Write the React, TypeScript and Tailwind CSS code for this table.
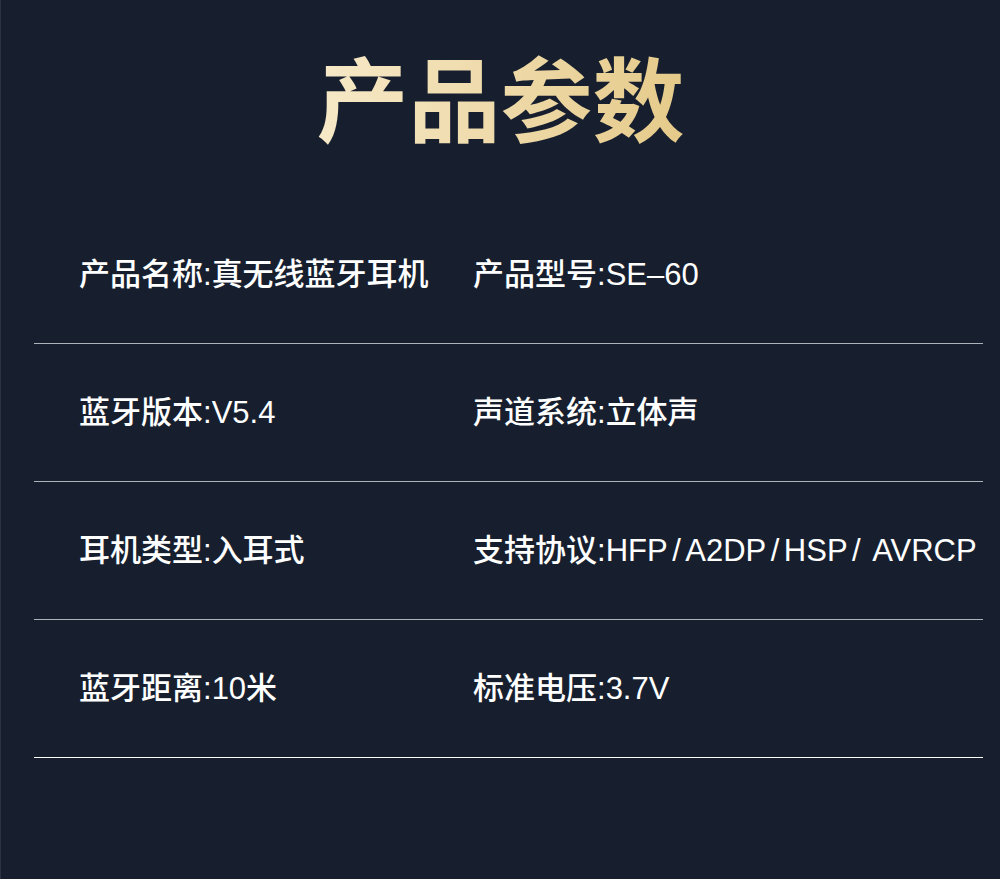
import React from "react";

const rows: [string, string][][] = [
  [
    ["产品名称:", "真无线蓝牙耳机"],
    ["产品型号:", "SE–60"],
  ],
  [
    ["蓝牙版本:", "V5.4"],
    ["声道系统:", "立体声"],
  ],
  [
    ["耳机类型:", "入耳式"],
    ["支持协议:", "HFP/A2DP/HSP/ AVRCP"],
  ],
  [
    ["蓝牙距离:", "10米"],
    ["标准电压:", "3.7V"],
  ],
];

function Value({ text }: { text: string }) {
  const parts = text.split("/");
  return (
    <>
      {parts.map((p, i) => (
        <React.Fragment key={i}>
          {p}
          {i < parts.length - 1 && <span className="px-[4.5px]">/</span>}
        </React.Fragment>
      ))}
    </>
  );
}

export default function App() {
  return (
    <div
      className="w-full h-[879px] bg-[#171f2f] border-l border-[#2a3243] overflow-hidden"
      style={{ fontFamily: '"Liberation Sans", "Noto Sans CJK SC", sans-serif' }}
    >
      <div className="h-[206px] flex justify-center pt-[40px]">
        <h1
          className="text-[92px] leading-[110px] font-bold bg-linear-to-r from-[#f7e9c8] to-[#e5ca89] bg-clip-text text-transparent"
          style={{ fontFamily: '"Noto Sans CJK SC", sans-serif' }}
        >
          产品参数
        </h1>
      </div>
      <div className="ml-[33px] mr-[17px]">
        {rows.map((row, i) => (
          <div
            key={i}
            className={`h-[138px] flex items-center pl-[45px] border-b ${
              i === rows.length - 1 ? "border-white" : "border-[#aeb2b9]"
            }`}
          >
            {row.map(([k, v], j) => (
              <div
                key={j}
                className={`${j === 0 ? "w-[394px]" : ""} text-white text-[31px] leading-[40px] font-medium whitespace-nowrap`}
              >
                {k}
                <Value text={v} />
              </div>
            ))}
          </div>
        ))}
      </div>
    </div>
  );
}
